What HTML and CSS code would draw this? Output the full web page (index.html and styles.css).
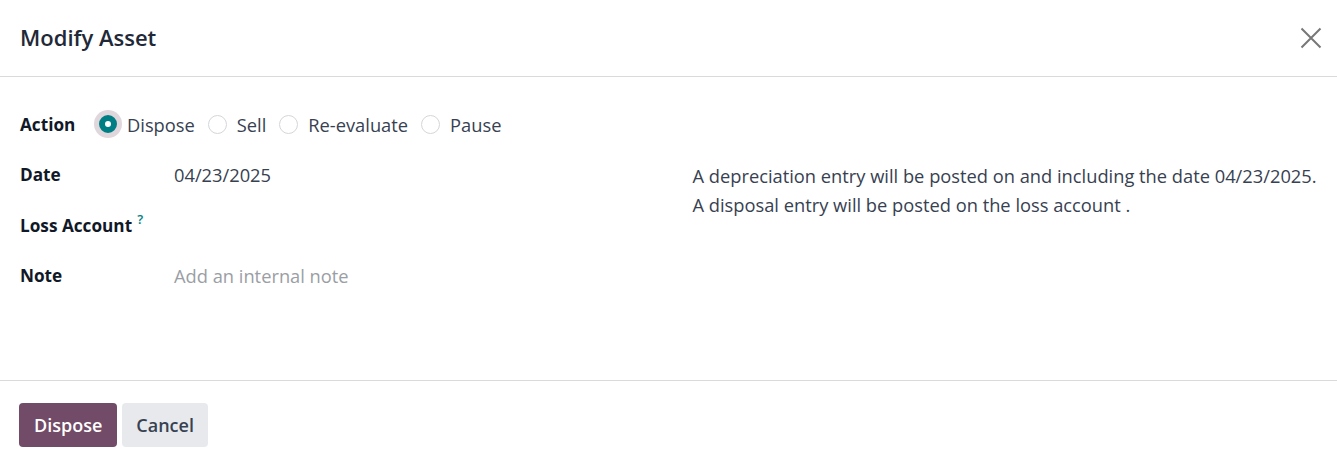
FILE: index.html
```html
<!DOCTYPE html>
<html>
<head>
<meta charset="utf-8">
<link rel="stylesheet" href="styles.css">
</head>
<body>
<div class="modal">
  <header class="modal-header">
    <h4 class="modal-title">Modify Asset</h4>
    <button class="close-btn" aria-label="Close">
      <svg width="22" height="22" viewBox="0 0 22 22"><path d="M1.5 1.5 L20.5 20.5 M20.5 1.5 L1.5 20.5" stroke="#777" stroke-width="2" fill="none"/></svg>
    </button>
  </header>
  <main class="modal-body">
    <div class="action-row">
      <span class="label">Action</span>
      <div class="radios">
        <label class="radio"><span class="dot checked"></span><span>Dispose</span></label>
        <label class="radio"><span class="dot"></span><span>Sell</span></label>
        <label class="radio"><span class="dot"></span><span>Re-evaluate</span></label>
        <label class="radio"><span class="dot"></span><span>Pause</span></label>
      </div>
    </div>
    <div class="columns">
      <div class="fields">
        <div class="field"><span class="label">Date</span><span class="value">04/23/2025</span></div>
        <div class="field"><span class="label">Loss Account<span class="help">?</span></span><span class="value"></span></div>
        <div class="field"><span class="label">Note</span><span class="value placeholder">Add an internal note</span></div>
      </div>
      <div class="info">
        <p>A depreciation entry will be posted on and including the date 04/23/2025.</p>
        <p>A disposal entry will be posted on the loss account .</p>
      </div>
    </div>
  </main>
  <footer class="modal-footer">
    <button class="btn btn-primary">Dispose</button>
    <button class="btn btn-secondary">Cancel</button>
  </footer>
</div>
</body>
</html>
```
FILE: styles.css
```css
* { box-sizing: border-box; }
html, body { margin: 0; padding: 0; background: #fff; }
body {
  font-family: "Open Sans", "Noto Sans", sans-serif;
  font-size: 18.3px;
  color: #374151;
}
.modal { width: 1337px; height: 462px; display: flex; flex-direction: column; }
.modal-header {
  height: 77px;
  border-bottom: 1px solid #d8dadd;
  display: flex;
  align-items: center;
  justify-content: space-between;
  padding: 0 11px 3px 20px;
}
.modal-title { margin: 0; font-size: 22px; font-weight: 600; color: #1f2937; line-height: 1; }
.close-btn { border: 0; background: none; padding: 0; width: 30px; height: 30px; display: flex; align-items: center; justify-content: center; margin-top: 3px; }
.modal-body { height: 303px; padding: 22px 20px 0 20px; }
.label { font-weight: 700; color: #111827; font-size: 17.2px; }
.action-row { display: flex; align-items: center; height: 50px; }
.action-row .label { width: 74px; }
.radios { display: flex; align-items: center; gap: 13px; }
.radio { display: flex; align-items: center; gap: 10px; }
.dot {
  width: 19px; height: 19px; border-radius: 50%;
  border: 1px solid #d4d6d9; background: #fff;
  display: inline-block;
}
.dot.checked {
  width: 18px; height: 18px;
  border: 6px solid #017e84;
  background: #fff;
  box-shadow: 0 0 0 5px #e0d7dd;
  margin-left: 5px;
}
.columns { display: grid; grid-template-columns: 1fr 1fr; column-gap: 48px; margin-top: 1px; }
.field { display: flex; align-items: center; height: 50.5px; line-height: 24px; }
.field .label { width: 154px; }
.help { color: #017e84; font-size: 13px; font-weight: 600; margin-left: 5px; vertical-align: 8px; line-height: 0; }
.placeholder { color: #9a9ea5; }
.info { padding-top: 11px; }
.info p { margin: 0; line-height: 29px; }
.modal-footer {
  flex: 1;
  border-top: 1px solid #d8dadd;
  display: flex;
  align-items: flex-start;
  gap: 5px;
  padding: 22px 19px 0;
}
.btn {
  height: 44px; border: 0; border-radius: 4px;
  font-family: inherit; font-size: 18px; font-weight: 600;
  padding: 0 15px;
}
.btn-secondary { padding: 0 14px; }
.btn-primary { background: #714b67; color: #fff; }
.btn-secondary { background: #e7e9ed; color: #374151; }
```
